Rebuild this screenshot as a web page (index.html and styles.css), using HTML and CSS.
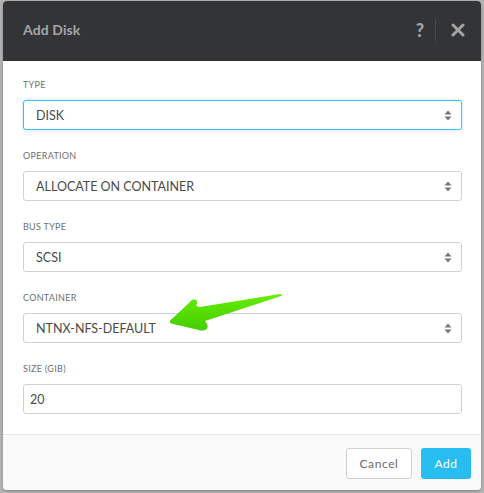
FILE: index.html
```html
<!DOCTYPE html>
<html>
<head>
<meta charset="utf-8">
<link rel="stylesheet" href="styles.css">
</head>
<body>
<div class="dialog">
  <div class="header">
    <div class="title">Add Disk</div>
    <div class="tools">
      <span class="help">?</span>
      <span class="sep"></span>
      <svg class="close" width="14" height="14" viewBox="0 0 14 14"><path d="M2 2 L12 12 M12 2 L2 12" stroke="#a3a3a3" stroke-width="3" stroke-linecap="round"/></svg>
    </div>
  </div>
  <div class="body">
    <div class="field">
      <div class="label">TYPE</div>
      <div class="select focus"><span>DISK</span><svg class="caret" width="8" height="11" viewBox="0 0 8 11"><path d="M4 0.5 L7.5 4.5 H0.5 Z M4 10.5 L7.5 6.5 H0.5 Z" fill="#777"/></svg></div>
    </div>
    <div class="field">
      <div class="label">OPERATION</div>
      <div class="select"><span>ALLOCATE ON CONTAINER</span><svg class="caret" width="8" height="11" viewBox="0 0 8 11"><path d="M4 0.5 L7.5 4.5 H0.5 Z M4 10.5 L7.5 6.5 H0.5 Z" fill="#777"/></svg></div>
    </div>
    <div class="field">
      <div class="label">BUS TYPE</div>
      <div class="select"><span>SCSI</span><svg class="caret" width="8" height="11" viewBox="0 0 8 11"><path d="M4 0.5 L7.5 4.5 H0.5 Z M4 10.5 L7.5 6.5 H0.5 Z" fill="#777"/></svg></div>
    </div>
    <div class="field">
      <div class="label">CONTAINER</div>
      <div class="select"><span>NTNX-NFS-DEFAULT</span><svg class="caret" width="8" height="11" viewBox="0 0 8 11"><path d="M4 0.5 L7.5 4.5 H0.5 Z M4 10.5 L7.5 6.5 H0.5 Z" fill="#777"/></svg></div>
    </div>
    <div class="field">
      <div class="label">SIZE (GIB)</div>
      <div class="input">20</div>
    </div>
  </div>
  <div class="footer">
    <button class="btn cancel">Cancel</button>
    <button class="btn add">Add</button>
  </div>
  <svg class="arrow" width="130" height="50" viewBox="0 0 130 50">
    <defs>
      <linearGradient id="g" x1="0" y1="0" x2="0" y2="1">
        <stop offset="0" stop-color="#66ee00"/>
        <stop offset="1" stop-color="#44cc00"/>
      </linearGradient>
    </defs>
    <path d="M3 28 Q4 26 6 25 L25 7 Q28 5 30 8 Q31 10 29 13 L33 14 L113 1 Q116 1 114 3 L38 28 L40 31 Q42 35 38 37 Q35 38 32 37 L6 31 Q2 30 3 28 Z" fill="url(#g)"/>
  </svg>
</div>
</body>
</html>
```
FILE: styles.css
```css
html, body {
  margin: 0;
  padding: 0;
}
body {
  background: #b4b4b4;
  width: 484px;
  height: 493px;
  overflow: hidden;
  font-family: Lato, "Open Sans", sans-serif;
}
.dialog {
  position: relative;
  margin: 1px 3px 0 3px;
  width: 478px;
  height: 489px;
  background: #fff;
  border-radius: 4px;
  overflow: hidden;
  box-shadow: 0 1px 3px rgba(0,0,0,0.3);
}
.header {
  height: 60px;
  box-sizing: border-box;
  background: #333436;
  display: flex;
  align-items: center;
  justify-content: space-between;
  padding: 0 16px 3px 20px;
}
.title {
  color: #a5a5a5;
  font-weight: 700;
  font-size: 14px;
  letter-spacing: 0.1px;
}
.tools {
  display: flex;
  align-items: center;
}
.help {
  color: #a3a3a3;
  font-weight: 900;
  font-size: 18px;
}
.sep {
  width: 1px;
  height: 22px;
  background: #4a4b4d;
  margin: 0 15px 0 11px;
}
.close {
  display: block;
}
.body {
  padding: 18px 19px 20px 20px;
  display: flex;
  flex-direction: column;
  gap: 20px;
}
.field {
  display: flex;
  flex-direction: column;
  gap: 9px;
}
.label {
  font-size: 9px;
  color: #6f6f6f;
  letter-spacing: 0.3px;
  line-height: 12px;
}
.select, .input {
  height: 30px;
  box-sizing: border-box;
  border: 1px solid #cfd1d3;
  border-radius: 3px;
  display: flex;
  align-items: center;
  justify-content: space-between;
  padding: 0 9px 0 12px;
  font-size: 12.5px;
  color: #4a4a4a;
}
.select.focus {
  border-color: #3ac0ef;
  box-shadow: 0 0 2px rgba(58,192,239,0.6);
}
.input {
  padding-left: 6px;
}
.footer {
  border-top: 1px solid #e6e6e6;
  background: #f9f9f9;
  height: 56px;
  display: flex;
  justify-content: flex-end;
  align-items: center;
  gap: 9px;
  padding: 0 10px 0 0;
}
.btn {
  height: 31px;
  border-radius: 3px;
  font-family: Lato, "Open Sans", sans-serif;
  font-size: 12px;
  letter-spacing: 0.6px;
  cursor: pointer;
}
.cancel {
  width: 66px;
  background: #fff;
  border: 1px solid #cfd1d3;
  color: #6b6b6b;
}
.add {
  width: 50px;
  background: #27bdf0;
  border: none;
  color: #fff;
}
.arrow {
  position: absolute;
  left: 164px;
  top: 292px;
}
```
